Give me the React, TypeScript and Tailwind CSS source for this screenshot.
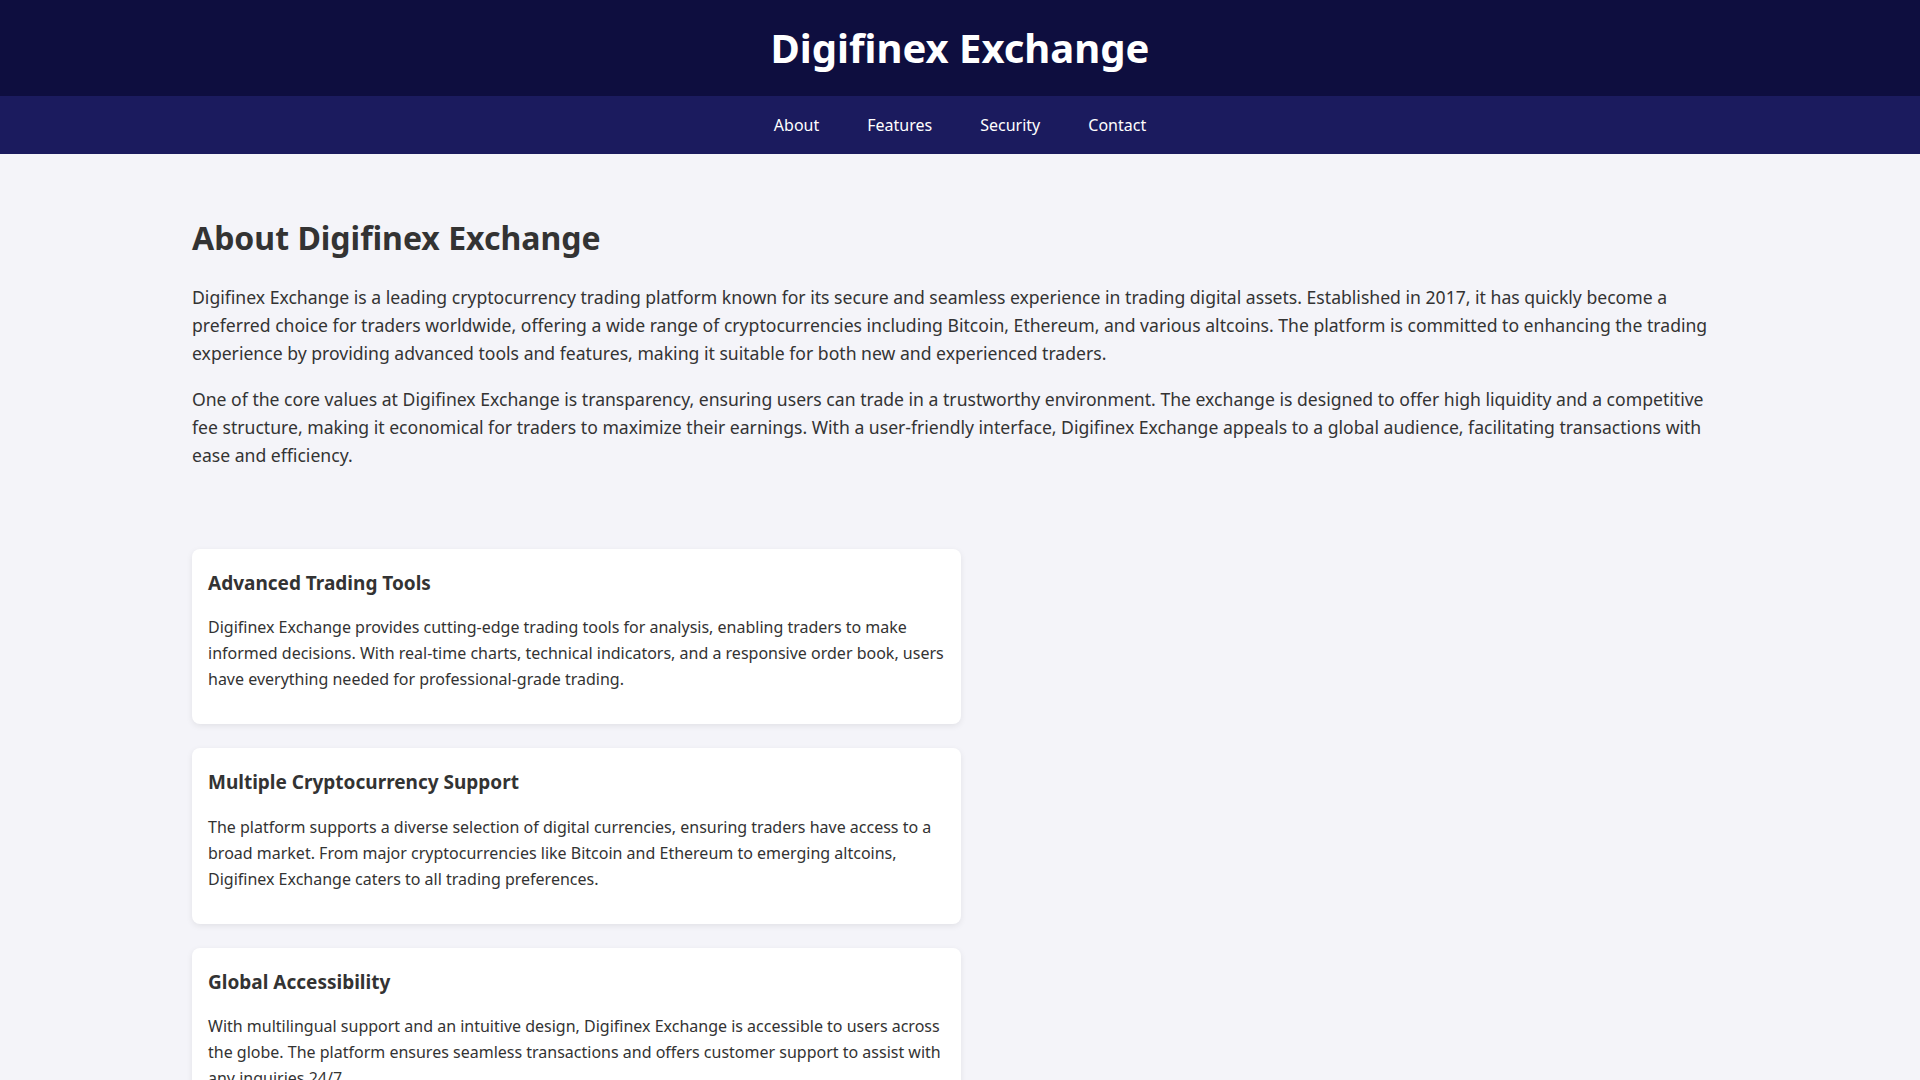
export default function App() {
  const cards = [
    {
      t: "Advanced Trading Tools",
      d: "Digifinex Exchange provides cutting-edge trading tools for analysis, enabling traders to make informed decisions. With real-time charts, technical indicators, and a responsive order book, users have everything needed for professional-grade trading.",
    },
    {
      t: "Multiple Cryptocurrency Support",
      d: "The platform supports a diverse selection of digital currencies, ensuring traders have access to a broad market. From major cryptocurrencies like Bitcoin and Ethereum to emerging altcoins, Digifinex Exchange caters to all trading preferences.",
    },
    {
      t: "Global Accessibility",
      d: "With multilingual support and an intuitive design, Digifinex Exchange is accessible to users across the globe. The platform ensures seamless transactions and offers customer support to assist with any inquiries 24/7.",
    },
  ];
  return (
    <div className="min-h-screen bg-[#f4f4f9] text-[#333] font-['Noto_Sans',sans-serif]">
      <header className="flex h-[96px] items-center justify-center bg-[#0e0e3f]">
        <h1 className="text-[40px] font-bold text-white">Digifinex Exchange</h1>
      </header>
      <nav className="flex h-[58px] items-center justify-center gap-12 bg-[#1b1b5e] text-[16px] text-white">
        <span>About</span>
        <span>Features</span>
        <span>Security</span>
        <span>Contact</span>
      </nav>
      <main className="mx-auto w-[1536px] pt-[62px] pb-10">
        <h2 className="text-[32px] font-bold leading-[1.4]">About Digifinex Exchange</h2>
        <p className="mt-[22px] text-[17.6px] leading-[28px]">
          Digifinex Exchange is a leading cryptocurrency trading platform known for its secure and seamless experience in trading digital assets. Established in 2017, it has quickly become a preferred choice for traders worldwide, offering a wide range of cryptocurrencies including Bitcoin, Ethereum, and various altcoins. The platform is committed to enhancing the trading experience by providing advanced tools and features, making it suitable for both new and experienced traders.
        </p>
        <p className="mt-[18px] text-[17.6px] leading-[28px]">
          One of the core values at Digifinex Exchange is transparency, ensuring users can trade in a trustworthy environment. The exchange is designed to offer high liquidity and a competitive fee structure, making it economical for traders to maximize their earnings. With a user-friendly interface, Digifinex Exchange appeals to a global audience, facilitating transactions with ease and efficiency.
        </p>
        <div className="mt-[80px] flex w-[769px] flex-col gap-6">
          {cards.map((c) => (
            <div key={c.t} className="rounded-lg bg-white px-4 pt-5 pb-8 shadow-[0_2px_6px_rgba(0,0,0,0.08)]">
              <h3 className="text-[19px] font-bold">{c.t}</h3>
              <p className="mt-[17px] text-[16px] leading-[26px]">{c.d}</p>
            </div>
          ))}
        </div>
      </main>
    </div>
  );
}
